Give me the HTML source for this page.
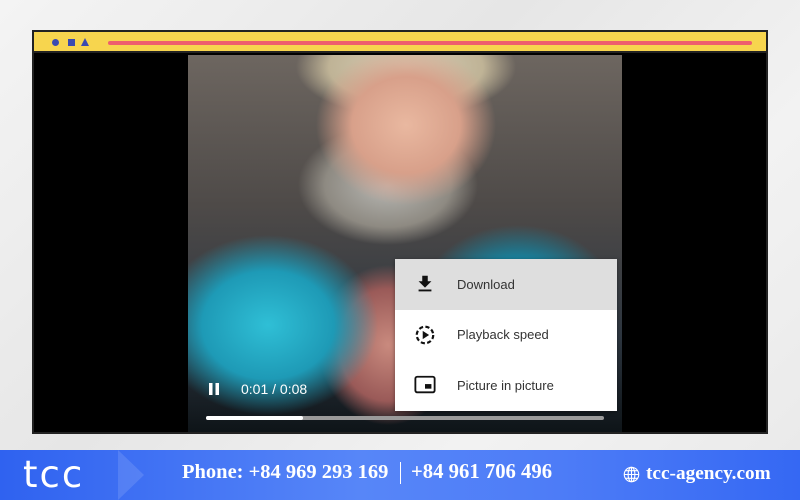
<!DOCTYPE html>
<html><head><style>
*{margin:0;padding:0;box-sizing:border-box}
body{width:800px;height:500px;overflow:hidden;position:relative;font-family:"Liberation Sans",sans-serif;background:linear-gradient(135deg,#f4f4f4 0%,#e6e6e6 40%,#f2f2f2 70%,#e9e9e9 100%)}
.frame{position:absolute;left:32px;top:30px;width:736px;height:404px;border:2px solid #222;background:#000}
.bar{position:absolute;left:0;top:0;right:0;height:21px;background:#f7d54e;border-bottom:2px solid #222}
.vid{position:absolute;left:154px;top:23px;width:434px;height:377px;overflow:hidden;
background:
radial-gradient(ellipse 90px 80px at 218px 70px,#e9b8a0 0%,#d8a08a 60%,transparent 100%),
radial-gradient(ellipse 110px 50px at 218px 12px,#d8cfb8 0%,#bfb396 70%,transparent 100%),
radial-gradient(ellipse 90px 60px at 200px 130px,#b8b8b4 0%,#8e8a82 70%,transparent 100%),
radial-gradient(ellipse 110px 90px at 80px 270px,#2fbfd6 0%,#1e9ab6 60%,transparent 100%),
radial-gradient(ellipse 100px 80px at 330px 250px,#2aa9c4 0%,#1a7e98 60%,transparent 100%),
radial-gradient(ellipse 70px 80px at 200px 290px,#c98a7e 0%,#9a5a58 70%,transparent 100%),
linear-gradient(180deg,#6d6660 0%,#4e4a48 40%,#2d3640 75%,#0e1418 100%)}
.menu{position:absolute;left:395px;top:259px;width:222px;height:152px;background:#fff;box-shadow:0 1px 4px rgba(0,0,0,.4)}
.row{height:50.6px;display:flex;align-items:center;font-size:13px;color:#333}
.row svg{margin-left:19px;margin-right:21px;flex:none}
.foot{position:absolute;left:0;top:450px;width:800px;height:50px;background:linear-gradient(90deg,#2f62f0 0%,#5786f8 45%,#4d7cf7 70%,#3568f3 100%);color:#fff}
.chev{position:absolute;left:118px;top:0;width:0;height:0;border-top:25px solid transparent;border-bottom:25px solid transparent;border-left:26px solid rgba(255,255,255,.12)}
.ph{position:absolute;top:11px;font-family:'Liberation Serif',serif;font-weight:bold;white-space:nowrap}
</style></head><body>
<div class="frame">
 <div class="bar">
  <div style="position:absolute;left:18px;top:7px;width:7px;height:7px;border-radius:50%;background:#3a4ab0"></div>
  <div style="position:absolute;left:34px;top:7px;width:7px;height:7px;background:#3a4ab0"></div>
  <div style="position:absolute;left:47px;top:6px;width:0;height:0;border-left:4.5px solid transparent;border-right:4.5px solid transparent;border-bottom:8px solid #3a4ab0"></div>
  <div style="position:absolute;left:74px;top:9px;width:644px;height:4px;border-radius:2px;background:#ee5e6e"></div>
 </div>
 <div class="vid">
  <svg style="position:absolute;left:20px;top:327px" width="12" height="14"><rect x="1" y="1" width="3.5" height="12" fill="#fff"/><rect x="7.5" y="1" width="3.5" height="12" fill="#fff"/></svg>
  <div style="position:absolute;left:53px;top:326px;color:#fff;font-size:14px">0:01 / 0:08</div>
  <div style="position:absolute;left:18px;top:361px;width:398px;height:4px;background:#9a9a9a;border-radius:2px"></div>
  <div style="position:absolute;left:18px;top:361px;width:97px;height:4px;background:#fff;border-radius:2px"></div>
 </div>
</div>
<div class="menu">
 <div class="row" style="background:#dedede"><svg width="22" height="22" viewBox="0 0 24 24"><path d="M19 9h-4V3H9v6H5l7 7 7-7zM5 18v2h14v-2H5z" fill="#111"/></svg>Download</div>
 <div class="row"><svg width="22" height="22" viewBox="0 0 24 24"><circle cx="12" cy="12" r="9" fill="none" stroke="#111" stroke-width="2.4" stroke-dasharray="4.5 2.6"/><path d="M9.5 7.5v9l7-4.5z" fill="#111"/></svg>Playback speed</div>
 <div class="row"><svg width="22" height="22" viewBox="0 0 24 24"><rect x="1.5" y="3" width="21" height="17" rx="2" fill="none" stroke="#111" stroke-width="2"/><rect x="12" y="11" width="7" height="5" fill="#111"/></svg>Picture in picture</div>
</div>
<div class="foot">
 <div class="chev"></div>
 <div style="position:absolute;left:23px;top:3px;font-size:37px;letter-spacing:2px;font-family:'DejaVu Sans',sans-serif;font-weight:normal">tcc</div>
 <div class="ph" style="left:182px;font-size:20.5px">Phone: +84 969 293 169</div>
 <div style="position:absolute;left:400px;top:12px;width:1px;height:22px;background:#fff"></div>
 <div class="ph" style="left:411px;font-size:20.7px">+84 961 706 496</div>
 <svg style="position:absolute;left:623px;top:16px" width="17" height="17" viewBox="0 0 20 20" fill="none" stroke="#fff" stroke-width="1.3"><circle cx="10" cy="10" r="8.5"/><ellipse cx="10" cy="10" rx="4" ry="8.5"/><path d="M1.5 10h17M3 5.5h14M3 14.5h14M10 1.5v17"/></svg>
 <div class="ph" style="left:646px;top:13px;font-size:19.3px">tcc-agency.com</div>
</div>
</body></html>
